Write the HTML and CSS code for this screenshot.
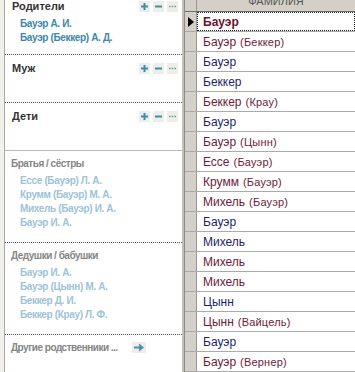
FILE: index.html
```html
<!DOCTYPE html>
<html lang="ru">
  <head>
    <meta charset="UTF-8" />
    <title>Родственники</title>
    <link rel="stylesheet" href="styles.css">
  </head>
  <body>
    <div class="page">
      <!-- Relatives panel -->
      <aside class="relatives">
        <div class="top">
          <section class="group first">
            <div class="group-head">
              <span class="group-title">Родители</span>
              <div class="tools">
                <button class="tool"><svg width="11" height="11" viewBox="0 0 11 11"><path d="M5.5 2v7M2 5.5h7" stroke="#3f8db3" stroke-width="2"/></svg></button>
                <button class="tool"><svg width="11" height="11" viewBox="0 0 11 11"><path d="M2 5.5h7" stroke="#3f8db3" stroke-width="2"/></svg></button>
                <button class="tool"><svg width="11" height="11" viewBox="0 0 11 11"><path d="M2 5.5h1.5M4.75 5.5h1.5M7.5 5.5h1.5" stroke="#6f95ad" stroke-width="1.5"/></svg></button>
              </div>
            </div>
            <ul class="people">
              <li>Бауэр А. И.</li>
              <li>Бауэр (Беккер) А. Д.</li>
            </ul>
          </section>
          <section class="group">
            <div class="group-head">
              <span class="group-title">Муж</span>
              <div class="tools">
                <button class="tool"><svg width="11" height="11" viewBox="0 0 11 11"><path d="M5.5 2v7M2 5.5h7" stroke="#3f8db3" stroke-width="2"/></svg></button>
                <button class="tool"><svg width="11" height="11" viewBox="0 0 11 11"><path d="M2 5.5h7" stroke="#3f8db3" stroke-width="2"/></svg></button>
                <button class="tool"><svg width="11" height="11" viewBox="0 0 11 11"><path d="M2 5.5h1.5M4.75 5.5h1.5M7.5 5.5h1.5" stroke="#6f95ad" stroke-width="1.5"/></svg></button>
              </div>
            </div>
            <ul class="people"></ul>
          </section>
          <section class="group last">
            <div class="group-head">
              <span class="group-title">Дети</span>
              <div class="tools">
                <button class="tool"><svg width="11" height="11" viewBox="0 0 11 11"><path d="M5.5 2v7M2 5.5h7" stroke="#3f8db3" stroke-width="2"/></svg></button>
                <button class="tool"><svg width="11" height="11" viewBox="0 0 11 11"><path d="M2 5.5h7" stroke="#3f8db3" stroke-width="2"/></svg></button>
                <button class="tool"><svg width="11" height="11" viewBox="0 0 11 11"><path d="M2 5.5h1.5M4.75 5.5h1.5M7.5 5.5h1.5" stroke="#6f95ad" stroke-width="1.5"/></svg></button>
              </div>
            </div>
            <ul class="people"></ul>
          </section>
        </div>

        <section class="kin">
          <div class="kin-title">Братья / сёстры</div>
          <ul class="people pale">
            <li>Ессе (Бауэр) Л. А.</li>
            <li>Крумм (Бауэр) М. А.</li>
            <li>Михель (Бауэр) И. А.</li>
            <li>Бауэр И. А.</li>
          </ul>
        </section>
        <section class="kin">
          <div class="kin-title">Дедушки / бабушки</div>
          <ul class="people pale">
            <li>Бауэр И. А.</li>
            <li>Бауэр (Цынн) М. А.</li>
            <li>Беккер Д. И.</li>
            <li>Беккер (Крау) Л. Ф.</li>
          </ul>
        </section>
        <div class="kin other">
          <span class="kin-title">Другие родственники ...</span>
          <button class="go"><svg width="14" height="11" viewBox="0 0 14 11"><path d="M2 5.5h6" stroke="#4b8fb4" stroke-width="2"/><path d="M7 1.5l5 4-5 4z" fill="#4b8fb4"/></svg></button>
        </div>
      </aside>

      <div class="splitter"></div>

      <!-- Surname grid -->
      <div class="grid">
        <div class="row head">
          <div class="rh"></div>
          <div class="cell"><span>ФАМИЛИЯ</span></div>
        </div>
        <div class="row current">
          <div class="rh"><svg width="6" height="10" viewBox="0 0 6 10"><path d="M0 0l6 5-6 5z" fill="#000"/></svg></div>
          <div class="cell f">Бауэр</div>
        </div>
        <div class="row"><div class="rh"></div><div class="cell f">Бауэр <small>(Беккер)</small></div></div>
        <div class="row"><div class="rh"></div><div class="cell m">Бауэр</div></div>
        <div class="row"><div class="rh"></div><div class="cell m">Беккер</div></div>
        <div class="row"><div class="rh"></div><div class="cell f">Беккер <small>(Крау)</small></div></div>
        <div class="row"><div class="rh"></div><div class="cell m">Бауэр</div></div>
        <div class="row"><div class="rh"></div><div class="cell f">Бауэр <small>(Цынн)</small></div></div>
        <div class="row"><div class="rh"></div><div class="cell f">Ессе <small>(Бауэр)</small></div></div>
        <div class="row"><div class="rh"></div><div class="cell f">Крумм <small>(Бауэр)</small></div></div>
        <div class="row"><div class="rh"></div><div class="cell f">Михель <small>(Бауэр)</small></div></div>
        <div class="row"><div class="rh"></div><div class="cell m">Бауэр</div></div>
        <div class="row"><div class="rh"></div><div class="cell m">Михель</div></div>
        <div class="row"><div class="rh"></div><div class="cell f">Михель</div></div>
        <div class="row"><div class="rh"></div><div class="cell f">Михель</div></div>
        <div class="row"><div class="rh"></div><div class="cell m">Цынн</div></div>
        <div class="row"><div class="rh"></div><div class="cell f">Цынн <small>(Вайцель)</small></div></div>
        <div class="row"><div class="rh"></div><div class="cell m">Бауэр</div></div>
        <div class="row"><div class="rh"></div><div class="cell f">Бауэр <small>(Вернер)</small></div></div>
      </div>
    </div>
  </body>
</html>
```

FILE: styles.css
```css
body {
  margin: 0;
  background: #f1f0eb;
  font-family: "Liberation Sans", Arial, sans-serif;
  overflow: hidden;
}
.page {
  display: flex;
  height: 372px;
  overflow: hidden;
}
.relatives {
  width: 177px;
  margin-left: 4px;
  border-left: 1px solid #aca9a2;
  background: #fff;
  flex-shrink: 0;
}
.top {
  margin-top: -7px;
  border-bottom: 1px solid #b9b9b9;
}
.group {
  padding-top: 7px;
  border-bottom: 1px dotted #555;
}
.group.last {
  border-bottom: none;
}
.group-head {
  display: flex;
  align-items: center;
  justify-content: space-between;
  height: 13px;
  padding: 0 4px 0 7px;
}
.group-title {
  font-size: 11px;
  font-weight: bold;
  color: #333;
  line-height: 13px;
}
.tools {
  display: flex;
  gap: 3px;
}
.tool,
.go {
  display: flex;
  align-items: center;
  justify-content: center;
  width: 11px;
  height: 11px;
  padding: 0;
  border: none;
  background: #eeede7;
}
.people {
  list-style: none;
  margin: 0;
  padding: 4px 0 9px 15px;
  min-height: 14px;
}
.people li {
  font-size: 10px;
  font-weight: bold;
  line-height: 14px;
  letter-spacing: -0.35px;
  color: #3d86ab;
  white-space: nowrap;
}
.people.pale {
  padding: 4px 0 12px 9px;
}
.people.pale li {
  color: #9dc3d6;
}
.kin {
  padding: 6px 0 0 6px;
  border-bottom: 1px dotted #555;
}
.kin-title {
  font-size: 10px;
  font-weight: bold;
  line-height: 13px;
  letter-spacing: -0.5px;
  color: #858585;
}
.kin.other {
  display: flex;
  align-items: center;
  gap: 14px;
  border-bottom: none;
}
.go {
  width: 14px;
}
.splitter {
  width: 3px;
  flex-shrink: 0;
  background: #c4c0b7;
  border-right: 1px solid #8f8c86;
  box-sizing: border-box;
}
.grid {
  flex: 1;
  background: #fff;
}
.row {
  display: flex;
  height: 20px;
  box-sizing: border-box;
  border-bottom: 1px solid #aaa;
}
.rh {
  width: 11px;
  flex-shrink: 0;
  background: #d4d0c8;
  border-right: 1px solid #9a978f;
  display: flex;
  align-items: center;
  justify-content: center;
}
.cell {
  flex: 1;
  display: flex;
  align-items: center;
  padding-left: 5px;
  font-size: 12px;
  white-space: nowrap;
  border: 1px solid transparent;
  border-bottom: none;
}
.cell small {
  font-size: 11px;
  margin-left: 4px;
  letter-spacing: 0.2px;
}
.cell.m {
  color: #1d1f6d;
}
.cell.f {
  color: #6e1a3b;
}
.row.head {
  height: 12px;
  overflow: hidden;
  border-bottom: 1px solid #6f6d69;
  background: #d4d0c8;
}
.row.head .cell {
  justify-content: center;
  align-items: flex-start;
  padding-left: 0;
  font-size: 11px;
  color: #555;
}
.row.head .cell span {
  margin-top: -7px;
  line-height: 14px;
}
.row.current .cell {
  border: 1px dotted #222;
  font-weight: bold;
  color: #6b1230;
}
```
